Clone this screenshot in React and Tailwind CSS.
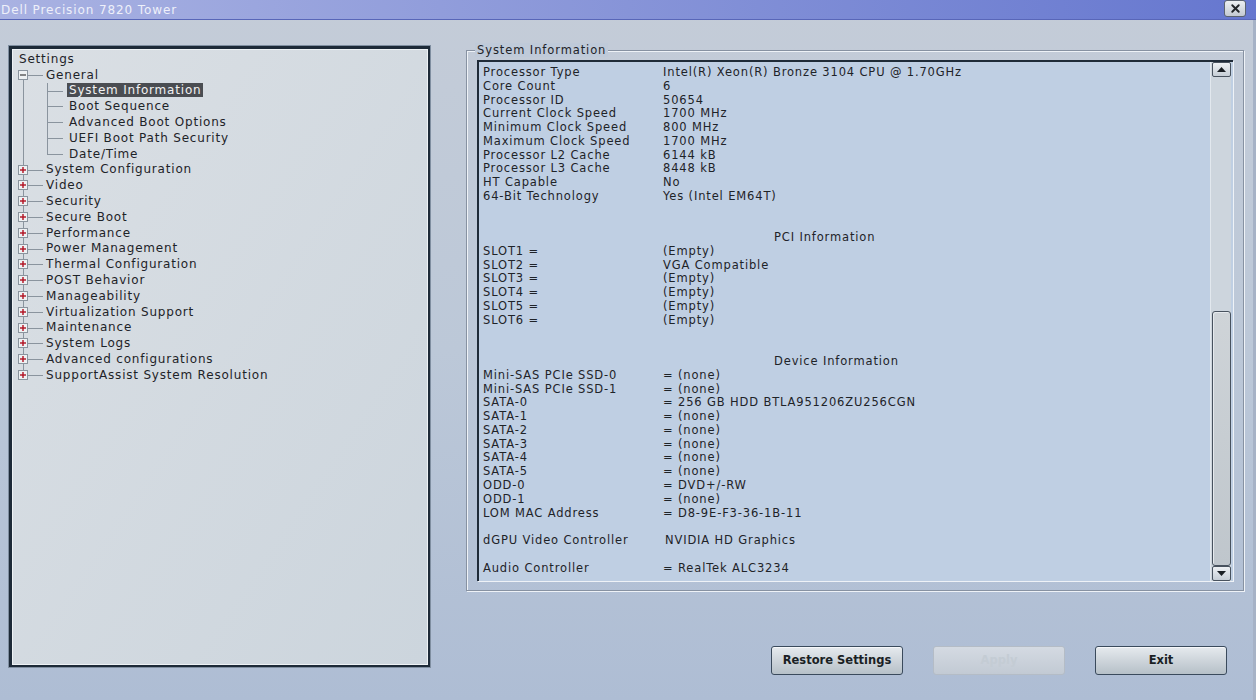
import { X } from "lucide-react";

const tree = [
  { label: "General", level: 0, open: true },
  { label: "System Information", level: 1, selected: true },
  { label: "Boot Sequence", level: 1 },
  { label: "Advanced Boot Options", level: 1 },
  { label: "UEFI Boot Path Security", level: 1 },
  { label: "Date/Time", level: 1, subLast: true },
  { label: "System Configuration", level: 0 },
  { label: "Video", level: 0 },
  { label: "Security", level: 0 },
  { label: "Secure Boot", level: 0 },
  { label: "Performance", level: 0 },
  { label: "Power Management", level: 0 },
  { label: "Thermal Configuration", level: 0 },
  { label: "POST Behavior", level: 0 },
  { label: "Manageability", level: 0 },
  { label: "Virtualization Support", level: 0 },
  { label: "Maintenance", level: 0 },
  { label: "System Logs", level: 0 },
  { label: "Advanced configurations", level: 0 },
  { label: "SupportAssist System Resolution", level: 0, last: true },
];

// label / value rows of the info list; null = empty line, string = heading
const info = [
  ["Processor Type", "Intel(R) Xeon(R) Bronze 3104 CPU @ 1.70GHz"],
  ["Core Count", "6"],
  ["Processor ID", "50654"],
  ["Current Clock Speed", "1700 MHz"],
  ["Minimum Clock Speed", "800 MHz"],
  ["Maximum Clock Speed", "1700 MHz"],
  ["Processor L2 Cache", "6144 kB"],
  ["Processor L3 Cache", "8448 kB"],
  ["HT Capable", "No"],
  ["64-Bit Technology", "Yes (Intel EM64T)"],
  null,
  null,
  "PCI Information",
  ["SLOT1 =", "(Empty)"],
  ["SLOT2 =", "VGA Compatible"],
  ["SLOT3 =", "(Empty)"],
  ["SLOT4 =", "(Empty)"],
  ["SLOT5 =", "(Empty)"],
  ["SLOT6 =", "(Empty)"],
  null,
  null,
  "Device Information",
  ["Mini-SAS PCIe SSD-0", "= (none)"],
  ["Mini-SAS PCIe SSD-1", "= (none)"],
  ["SATA-0", "= 256 GB HDD BTLA951206ZU256CGN"],
  ["SATA-1", "= (none)"],
  ["SATA-2", "= (none)"],
  ["SATA-3", "= (none)"],
  ["SATA-4", "= (none)"],
  ["SATA-5", "= (none)"],
  ["ODD-0", "= DVD+/-RW"],
  ["ODD-1", "= (none)"],
  ["LOM MAC Address", "= D8-9E-F3-36-1B-11"],
  null,
  ["dGPU Video Controller", "NVIDIA HD Graphics"],
  null,
  ["Audio Controller", "= RealTek ALC3234"],
];

const ExpandBox = ({ open }) => (
  <div className="absolute left-[5px] top-[3px] w-[10px] h-[10px] border border-[#8a949e] bg-[#eef1f3] flex items-center justify-center z-10">
    <svg width="8" height="8" viewBox="0 0 8 8">
      <path d="M1 4h6" stroke={open ? "#555" : "#b01020"} strokeWidth="1.4" />
      {!open && <path d="M4 1v6" stroke="#b01020" strokeWidth="1.4" />}
    </svg>
  </div>
);

const TreeRow = ({ item }) => {
  const line = "absolute bg-[#8a949e]";
  return (
    <div className="relative h-[15.8px] flex items-center">
      {/* main vertical line */}
      <div
        className={`${line} left-[10px] w-px ${
          item.label === "General" ? "top-[8px] bottom-0" : item.last ? "top-0 h-[8px]" : "top-0 bottom-0"
        }`}
      />
      {item.level === 0 ? (
        <>
          <ExpandBox open={item.open} />
          <div className={`${line} left-[15px] w-[15px] h-px top-[8px]`} />
          <span className="ml-[33px]">{item.label}</span>
        </>
      ) : (
        <>
          <div className={`${line} left-[34px] w-px ${item.subLast ? "top-0 h-[8px]" : "top-0 bottom-0"}`} />
          <div className={`${line} left-[34px] w-[16px] h-px top-[8px]`} />
          <span
            className={`ml-[54px] px-[2px] leading-[14px] ${
              item.selected ? "bg-[#4a4d52] text-[#f2f2f2]" : ""
            }`}
          >
            {item.label}
          </span>
        </>
      )}
    </div>
  );
};

const Btn = ({ children, disabled }) => (
  <button
    className={`w-[132px] h-[29px] rounded-[3px] border text-[11.5px] font-bold ${
      disabled
        ? "border-[#b4bcc6] bg-gradient-to-b from-[#d4dae2] to-[#c2cad4] text-[#c4ccd4]"
        : "border-[#3a4a5c] bg-gradient-to-b from-[#e6eaee] to-[#b6c0c8] text-[#1a1f24] shadow-[inset_0_1px_0_#f6f8fa]"
    }`}
  >
    {children}
  </button>
);

export default function App() {
  return (
    <div
      className="w-[1256px] h-[700px] overflow-hidden flex flex-col bg-gradient-to-b from-[#c4ccd8] via-[#bcc8d8] to-[#aebdd4] text-[#1e2328]"
      style={{ fontFamily: '"DejaVu Sans", Verdana, sans-serif' }}
    >
      {/* title bar */}
      <div className="h-[20px] flex items-center justify-between bg-gradient-to-r from-[#a9b2e2] via-[#8794d8] to-[#6677cf] border-b border-[#5866b8]">
        <span className="pl-[1px] text-[12px] tracking-[0.9px] text-[#eef0fa]">Dell Precision 7820 Tower</span>
        <div className="mr-[10px] self-start w-[22px] h-[17px] rounded-[3px] border border-[#5b6370] bg-gradient-to-b from-[#eceff2] to-[#c4cad2] flex items-center justify-center">
          <X size={13} strokeWidth={3.5} className="text-[#202428]" />
        </div>
      </div>

      <div className="flex flex-1 border-r-[3px] border-[#a6b2c6]">
        {/* left tree panel */}
        <div className="ml-[8px] mt-[25px] w-[423px] h-[623px] border border-[#7f8ea0] shrink-0">
          <div className="h-full border-t-[3px] border-l-[3px] border-b-[2px] border-r-[2px] border-[#1d2a38]">
            <div className="h-full border border-[#eef2f5] bg-gradient-to-br from-[#dadfe4] to-[#ccd5dd] pt-[1px] text-[12px] tracking-[0.8px]">
              <div className="h-[15.8px] flex items-center pl-[6px]">Settings</div>
              {tree.map((item) => (
                <TreeRow key={item.label} item={item} />
              ))}
            </div>
          </div>
        </div>

        {/* right column */}
        <div className="ml-[35px] flex-1 flex flex-col">
          <div className="mt-[30px] w-[778px] h-[541px] border border-[#8792a2] shadow-[inset_1px_1px_0_#eef2f7,1px_1px_0_#eef2f7] relative pt-[9px] pl-[10px] pr-[10px] pb-[9px]">
            <span className="absolute left-[8px] -top-[8px] px-[2px] text-[11.5px] leading-[14px] tracking-[0.9px] bg-[#bfcad9]">System Information</span>
            <div className="h-full flex border-t-[2px] border-l-[2px] border-[#1f2b38] shadow-[1px_1px_0_#eef2f7] bg-[#bfcfe3]">
              <div className="flex-1 pt-[4px] pl-[4px] text-[11.5px] tracking-[0.85px]">
                {info.map((row, i) =>
                  row === null ? (
                    <div key={i} className="h-[13.78px]" />
                  ) : typeof row === "string" ? (
                    <div key={i} className="h-[13.78px] leading-[13.78px] pl-[291px]">
                      {row}
                    </div>
                  ) : (
                    <div key={i} className="h-[13.78px] leading-[13.78px] flex">
                      <span className="w-[180px] shrink-0">{row[0]}</span>
                      <span className={row[0].startsWith("dGPU") ? "pl-[2px]" : ""}>{row[1]}</span>
                    </div>
                  )
                )}
              </div>
              {/* scrollbar */}
              <div className="w-[21px] flex flex-col items-center bg-[#cdd5dd] border-l border-[#e2e8ee] mr-[2px]">
                <div className="w-[19px] h-[15px] rounded-[2px] border border-[#48525e] bg-gradient-to-b from-[#eef1f4] to-[#c6ced6] flex items-center justify-center">
                  <svg width="9" height="5" viewBox="0 0 9 5"><path d="M0 5 4.5 0 9 5z" fill="#1a1f24" /></svg>
                </div>
                <div className="flex-1 w-full" />
                <div className="w-[19px] h-[255px] rounded-[3px] border border-[#48525e] bg-gradient-to-b from-[#cfd4d8] to-[#bfc6cc] shadow-[inset_1px_1px_0_#e6eaee]" />
                <div className="w-[19px] h-[15px] rounded-[2px] border border-[#48525e] bg-gradient-to-b from-[#eef1f4] to-[#c6ced6] flex items-center justify-center">
                  <svg width="9" height="5" viewBox="0 0 9 5"><path d="M0 0 4.5 5 9 0z" fill="#1a1f24" /></svg>
                </div>
              </div>
            </div>
          </div>

          <div className="mt-[55px] w-[778px] pr-[17px] flex justify-end gap-[30px]">
            <Btn>Restore Settings</Btn>
            <Btn disabled>Apply</Btn>
            <Btn>Exit</Btn>
          </div>
        </div>
      </div>
    </div>
  );
}
